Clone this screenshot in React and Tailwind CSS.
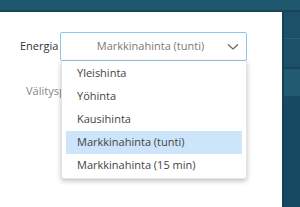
import React from "react";

export default function App() {
  const items = ["Yleishinta", "Yöhinta", "Kausihinta", "Markkinahinta (tunti)", "Markkinahinta (15 min)"];
  return (
    <div className="w-[300px] h-[207px] overflow-hidden bg-[#1c5068] flex flex-col" style={{ fontFamily: '"Open Sans", "Noto Sans", sans-serif' }}>
      <div className="h-[12px] bg-[#1e576e] border-b-2 border-[#17465a] shrink-0" />
      <div className="flex flex-1">
        <div className="w-[282px] bg-white relative">
          <div className="flex items-center pt-[20px]">
            <span className="w-[60px] pl-[20px] text-[11px] text-[#333]">Energia</span>
            <div className="w-[187px] h-[29px] border border-[#8cc4ee] rounded-[2px] flex items-center relative">
              <span className="flex-1 text-center text-[11px] text-[#7a7a7a] pr-[6px]">Markkinahinta (tunti)</span>
              <svg className="absolute right-[7px] top-[10px]" width="12" height="8" viewBox="0 0 12 8" fill="none">
                <path d="M1 1.5 L6 6 L11 1.5" stroke="#666" strokeWidth="1.3" />
              </svg>
            </div>
          </div>
          <div className="ml-[26px] mt-[22px] w-[35px] overflow-hidden whitespace-nowrap text-[11px] text-[#888]">Välityspalkkio</div>
          <div className="absolute left-[61px] top-[49px] w-[186px] bg-white rounded-b-[3px] shadow-[0_2px_5px_rgba(0,0,0,0.25)] border border-[#e4e4e4] border-t-0 py-[1px]">
            {items.map((t, i) => (
              <div
                key={t}
                className={`mx-[4px] h-[23px] flex items-center pl-[11px] text-[11px] text-[#444] ${i === 3 ? "bg-[#cce5fa]" : ""}`}
              >
                {t}
              </div>
            ))}
          </div>
        </div>
        <div className="flex-1 border-l-2 border-[#164255] flex flex-col">
          <div className="h-[27px] border-b border-[#2a6078]" />
          <div className="h-[30px] border-b-2 border-[#174457]" />
          <div className="h-[28px] bg-[#225a72] border-b border-[#194a5e]" />
          <div className="flex-1 bg-[#174a62]" />
        </div>
      </div>
    </div>
  );
}
